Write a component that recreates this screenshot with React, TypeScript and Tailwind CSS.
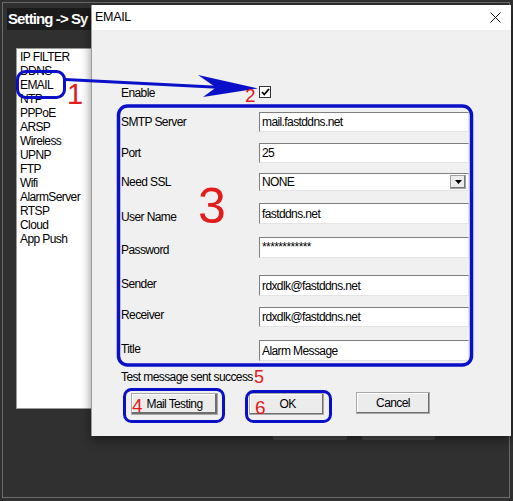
import React from 'react';

const listItems = ['IP FILTER', 'DDNS', 'EMAIL', 'NTP', 'PPPoE', 'ARSP', 'Wireless', 'UPNP', 'FTP', 'Wifi', 'AlarmServer', 'RTSP', 'Cloud', 'App Push'];

const fields = [
    { label: 'SMTP Server', value: 'mail.fastddns.net', row: 'mt-[14px] h-[20px]', lab: '' },
    { label: 'Port', value: '25', row: 'mt-[11px] h-[20px]', lab: '' },
    { label: 'Need SSL', value: 'NONE', row: 'mt-[10px] h-[18px]', lab: '', select: true },
    { label: 'User Name', value: 'fastddns.net', row: 'mt-[12px] h-[21px]', lab: 'translate-y-[3px]' },
    { label: 'Password', value: '************', row: 'mt-[13px] h-[21px]', lab: 'translate-y-[2px]', password: true },
    { label: 'Sender', value: 'rdxdlk@fastddns.net', row: 'mt-[17px] h-[21px]', lab: '-translate-y-[2px]' },
    { label: 'Receiver', value: 'rdxdlk@fastddns.net', row: 'mt-[11px] h-[20px]', lab: '-translate-y-[2px]' },
    { label: 'Title', value: 'Alarm Message', row: 'mt-[13px] h-[21px]', lab: '-translate-y-[2px]' },
];

const txt = 'text-[12px] leading-[14px] tracking-[-0.6px] text-black';
const btn = 'flex items-center justify-center h-[22px] bg-[#ececec] border border-[#a9a9a9] shadow-[inset_-1px_-1px_0_#6e6e6e,inset_1px_1px_0_#ffffff]';

function Field({ f }: { f: typeof fields[number] }) {
    return (
        <div className={`flex items-center ${f.row}`}>
            <span className={`w-[138px] ${txt} ${f.lab}`}>{f.label}</span>
            <div className="relative flex h-full w-[210px] items-center border-t border-l border-[#7f7f7f] border-b border-r border-b-[#e4e4e4] border-r-[#e4e4e4] bg-white pl-[2px]">
                <span className={`${txt} ${f.password ? 'self-start pt-[2px]' : ''}`}>{f.value}</span>
                {f.select && (
                    <div className="absolute right-[2px] top-[1px] flex h-[14px] w-[16px] items-center justify-center border border-[#a0a0a0] bg-[#ececec] shadow-[inset_-1px_-1px_0_#7a7a7a]">
                        <svg width="7" height="4" viewBox="0 0 7 4"><path d="M0 0h7L3.5 4z" fill="#000" /></svg>
                    </div>
                )}
            </div>
        </div>
    );
}

export default function App() {
    return (
        <div className="relative h-[501px] w-[513px] overflow-hidden bg-[#303030] pt-[2px] pl-[2px] pr-[3px] pb-[3px] font-['Liberation_Sans',Arial,sans-serif]">
            {/* background settings window */}
            <div className="h-full border border-[#6a6a6a] pl-[4px] pt-[5px]">
                <div className="h-[22px] w-[84px] overflow-hidden whitespace-nowrap bg-[#1b1b1b] pl-[1px] text-[15px] font-bold leading-[22px] tracking-[-0.9px] text-white">
                    Setting -&gt; Sy
                </div>
                <div className="ml-[9px] mt-[18px] h-[361px] w-[120px] border border-[#9a9a9a] bg-white pl-[3px] pt-[1px]">
                    {listItems.map((item) => (
                        <div key={item} className={txt}>{item}</div>
                    ))}
                </div>
                <div className="ml-[266px] mt-[17px] flex gap-[15px]">
                    <div className="h-[14px] w-[74px] rounded-[2px] bg-[#4a4a4a]" />
                    <div className="h-[14px] w-[73px] rounded-[2px] bg-[#4a4a4a]" />
                </div>
            </div>

            {/* EMAIL dialog */}
            <div className="absolute left-[91px] top-[5px] flex h-[431px] w-[420px] flex-col border-l border-[#9c9c9c] shadow-[0_4px_10px_rgba(0,0,0,0.45)]">
                <div className="flex h-[25px] items-center justify-between bg-white pl-[3px] pr-[10px]">
                    <span className="text-[12.5px] tracking-[-0.3px] text-black">EMAIL</span>
                    <svg width="11" height="11" viewBox="0 0 11 11">
                        <path d="M0.5 0.5L10.5 10.5M10.5 0.5L0.5 10.5" stroke="#111" strokeWidth="1" />
                    </svg>
                </div>
                <div className="flex-1 bg-[#f0f0f0] pl-[29px] pt-[56px]">
                    <div className="flex h-[12px] items-center">
                        <span className={`w-[138px] ${txt} translate-y-[1px]`}>Enable</span>
                        <div className="flex h-[12px] w-[12px] items-center justify-center border border-[#333] bg-white">
                            <svg width="9" height="8" viewBox="0 0 9 8">
                                <path d="M1 4l2.3 2.5L8 1" stroke="#000" strokeWidth="1.8" fill="none" />
                            </svg>
                        </div>
                    </div>
                    {fields.map((f) => (
                        <Field key={f.label} f={f} />
                    ))}
                    <div className={`mt-[9px] ${txt}`}>Test message sent success</div>
                    <div className="mt-[9px] flex items-start">
                        <div className={`${btn} ml-[10px] w-[87px] shadow-[inset_-2px_-2px_0_#6e6e6e,inset_1px_1px_0_#ffffff]`}>
                            <span className={txt}>Mail Testing</span>
                        </div>
                        <div className={`${btn} ml-[31px] w-[75px] pl-[2px]`}>
                            <span className={txt}>OK</span>
                        </div>
                        <div className={`${btn} ml-[32px] -mt-[1px] w-[74px]`}>
                            <span className={txt}>Cancel</span>
                        </div>
                    </div>
                </div>
            </div>

            {/* annotations */}
            <svg className="pointer-events-none absolute left-0 top-0" width="513" height="501" viewBox="0 0 513 501">
                <g fill="none" stroke="#0a10c8">
                    <rect x="17.5" y="71.5" width="47" height="26" rx="8" strokeWidth="3" />
                    <path d="M65 79.5L222 87.5" strokeWidth="3" />
                    <rect x="118.5" y="106" width="353" height="259" rx="9" strokeWidth="3.5" />
                    <rect x="124.5" y="389.5" width="99" height="32" rx="7" strokeWidth="3" />
                    <rect x="246.5" y="391.5" width="84" height="30" rx="7" strokeWidth="3" />
                </g>
                <path d="M198 75L258 88.5L203 97L216 87.5Z" fill="#0a10c8" />
            </svg>
            <span className="pointer-events-none absolute left-[67px] top-[80px] text-[29px] leading-[29px] text-[#e21b1b]">1</span>
            <span className="pointer-events-none absolute left-[245px] top-[86px] text-[19px] leading-[19px] text-[#e21b1b]">2</span>
            <span className="pointer-events-none absolute left-[198px] top-[181px] text-[50px] leading-[50px] text-[#e21b1b]">3</span>
            <span className="pointer-events-none absolute left-[132px] top-[396px] text-[19px] leading-[19px] text-[#e21b1b]">4</span>
            <span className="pointer-events-none absolute left-[254px] top-[368px] text-[18px] leading-[18px] text-[#e21b1b]">5</span>
            <span className="pointer-events-none absolute left-[255px] top-[398px] text-[19px] leading-[19px] text-[#e21b1b]">6</span>
        </div>
    );
}
